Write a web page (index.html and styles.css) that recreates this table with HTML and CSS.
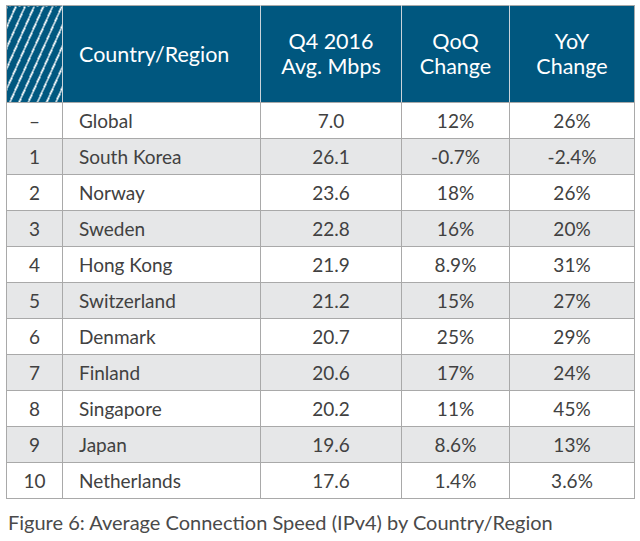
FILE: index.html
```html
<!DOCTYPE html>
<html>
<head>
<meta charset="utf-8">
<link rel="stylesheet" href="styles.css">
</head>
<body>
<div class="wrap">
<table class="speed">
  <colgroup>
    <col class="c1"><col class="c2"><col class="c3"><col class="c4"><col class="c5">
  </colgroup>
  <thead>
    <tr>
      <th class="hatch"></th>
      <th class="left">Country/Region</th>
      <th>Q4 2016<br>Avg. Mbps</th>
      <th>QoQ<br>Change</th>
      <th>YoY<br>Change</th>
    </tr>
  </thead>
  <tbody>
    <tr><td>–</td><td class="left">Global</td><td>7.0</td><td>12%</td><td>26%</td></tr>
    <tr class="alt"><td>1</td><td class="left">South Korea</td><td>26.1</td><td>-0.7%</td><td>-2.4%</td></tr>
    <tr><td>2</td><td class="left">Norway</td><td>23.6</td><td>18%</td><td>26%</td></tr>
    <tr class="alt"><td>3</td><td class="left">Sweden</td><td>22.8</td><td>16%</td><td>20%</td></tr>
    <tr><td>4</td><td class="left">Hong Kong</td><td>21.9</td><td>8.9%</td><td>31%</td></tr>
    <tr class="alt"><td>5</td><td class="left">Switzerland</td><td>21.2</td><td>15%</td><td>27%</td></tr>
    <tr><td>6</td><td class="left">Denmark</td><td>20.7</td><td>25%</td><td>29%</td></tr>
    <tr class="alt"><td>7</td><td class="left">Finland</td><td>20.6</td><td>17%</td><td>24%</td></tr>
    <tr><td>8</td><td class="left">Singapore</td><td>20.2</td><td>11%</td><td>45%</td></tr>
    <tr class="alt"><td>9</td><td class="left">Japan</td><td>19.6</td><td>8.6%</td><td>13%</td></tr>
    <tr><td>10</td><td class="left">Netherlands</td><td>17.6</td><td>1.4%</td><td>3.6%</td></tr>
  </tbody>
</table>
<p class="caption">Figure 6: Average Connection Speed (IPv4) by Country/Region</p>
</div>
</body>
</html>
```

FILE: styles.css
```css
html, body {
  margin: 0;
  padding: 0;
  background: #ffffff;
}
.wrap {
  padding: 5px 0 0 6px;
  font-family: Lato, "Open Sans", sans-serif;
}
.speed {
  border-collapse: collapse;
  table-layout: fixed;
  width: 628px;
  color: #414141;
  font-size: 19px;
}
.c1 { width: 56px; }
.c2 { width: 198px; }
.c3 { width: 141px; }
.c4 { width: 108px; }
.c5 { width: 125px; }
.speed th,
.speed td {
  border: 1px solid #a9a9a9;
  text-align: center;
  padding: 0;
}
.speed thead th {
  background: #00577f;
  color: #ffffff;
  font-weight: 400;
  font-size: 21.5px;
  line-height: 25px;
  height: 96px;
  border-color: #a9a9a9 #c9d3da #a9a9a9 #c9d3da;
}
.speed thead th.hatch {
  background-color: #00577f;
  background-image: repeating-linear-gradient(114deg, #00577f 0px, #00577f 6.8px, #ffffff 6.8px, #ffffff 8.4px);
}
.speed thead th:first-child { border-left-color: #a9a9a9; }
.speed thead th:last-child { border-right-color: #a9a9a9; }
.speed td {
  height: 35px;
}
.speed .left {
  text-align: left;
  padding-left: 16px;
}
.speed tr.alt td {
  background: #e6e7e8;
}
.caption {
  margin: 11px 0 0 2px;
  font-size: 20px;
  color: #4a4a4a;
}
```
